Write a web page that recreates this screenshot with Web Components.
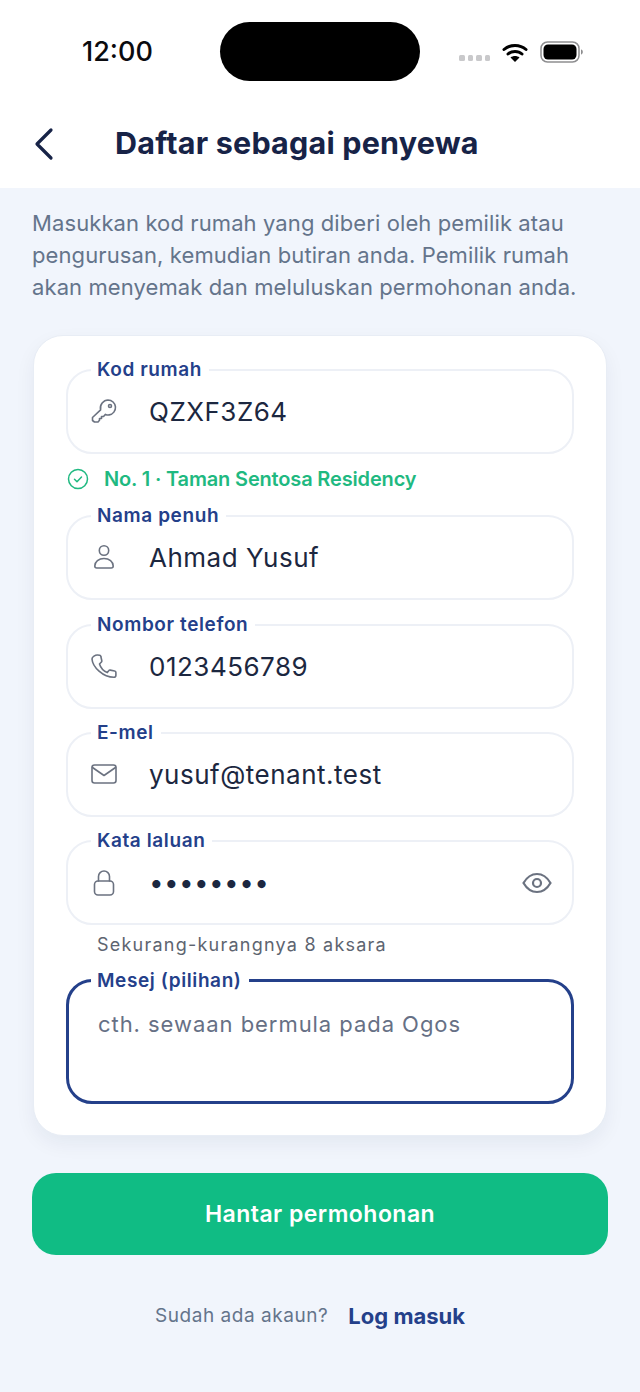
<!DOCTYPE html>
<html>
<head>
<meta charset="utf-8">
<style>
html, body { margin: 0; padding: 0; }
body { background: #f1f5fc; font-family: Inter, "Noto Sans", sans-serif; width: 640px; height: 1392px; overflow: hidden; }
</style>
</head>
<body>
<app-page>
	<status-bar></status-bar>
	<top-bar>Daftar sebagai penyewa</top-bar>
	<intro-text>Masukkan kod rumah yang diberi oleh pemilik atau pengurusan, kemudian butiran anda. Pemilik rumah akan menyemak dan meluluskan permohonan anda.</intro-text>
	<form-card>
		<form-field label="Kod rumah" icon="key" value="QZXF3Z64"></form-field>
		<ok-note>No. 1 · Taman Sentosa Residency</ok-note>
		<form-field label="Nama penuh" icon="user" value="Ahmad Yusuf"></form-field>
		<form-field class="gap" label="Nombor telefon" icon="phone" value="0123456789"></form-field>
		<form-field class="gap" label="E-mel" icon="mail" value="yusuf@tenant.test"></form-field>
		<form-field class="gap" label="Kata laluan" icon="lock" value="••••••••" secret></form-field>
		<hint-text>Sekurang-kurangnya 8 aksara</hint-text>
		<form-field label="Mesej (pilihan)" value="cth. sewaan bermula pada Ogos" area></form-field>
	</form-card>
	<big-button>Hantar permohonan</big-button>
	<login-row></login-row>
</app-page>
<script>
const ICONS = {
	key: '<circle cx="19" cy="7" r="1.500"/><path d="M17 1a7.500 7.500 0 0 1 1.200 14.900c-1.300.2-2.500 0-3.700-.5l-2 2.100H10.500v2h-2v1.800L7 23H3.500L1.500 21.500V18.500l8.100-7.600C8.400 5.900 12.500 1 17 1z"/>',
	user: '<circle cx="13" cy="5.500" r="4.700"/><path d="M3.800 21c0-4.500 4-7.500 9.200-7.500s9.200 3 9.200 7.500c0 1-.8 2-2 2H5.800c-1.200 0-2-1-2-2z"/>',
	phone: '<path d="M6.500 1 8.700 1.300c.6.100 1 .5 1.100 1l1 4.400c.1.500 0 1-.4 1.300L8.500 10c1.300 4.200 3.900 7 7.800 8.600l1.600-2c.3-.4.800-.6 1.300-.5l4.500.9c.7.100 1.200.7 1.200 1.400v2.800c0 1.100-.9 2-2 2C12 23.200 1.500 13 1 5c-.1-2 3.500-4.200 5.500-4z"/>',
	mail: '<rect x="1" y="3" width="24" height="18" rx="2.500"/><path d="M1.500 5.500 13 13.500l11.500-8"/>',
	lock: '<rect x="3.500" y="11" width="19" height="14" rx="3.500"/><path d="M7.500 11V6.500a5.500 5.500 0 0 1 11 0V11"/>'
};

class AppPage extends HTMLElement {
	constructor() {
		super();
		this.attachShadow({ mode: "open" });
		this.shadowRoot.innerHTML = `
			<style>:host { display: flex; flex-direction: column; width: 640px; }</style>
			<slot></slot>`;
	}
}

class StatusBar extends HTMLElement {
	constructor() {
		super();
		this.attachShadow({ mode: "open" });
		this.shadowRoot.innerHTML = `
			<style>
				:host { display: block; background: #fff; height: 100px; }
				.row { display: flex; align-items: flex-start; padding: 22px 50px 0 82px; }
				.time { font: 500 27px/60px Inter, sans-serif; color: #0b0b0f; width: 138px; }
				.island { width: 200px; height: 59px; border-radius: 30px; background: #000; }
				.right { flex: 1; display: flex; align-items: center; height: 60px; padding-left: 39px; }
				.dots { display: flex; gap: 3px; margin-right: 12px; margin-top: 12px; }
				.dots i { width: 5.500px; height: 5.500px; border-radius: 1.500px; background: #c9c9cb; }
				.batt { margin-left: 12px; }
			</style>
			<div class="row">
				<span class="time">12:00</span>
				<div class="island"></div>
				<div class="right">
					<div class="dots"><i></i><i></i><i></i><i></i></div>
					<svg width="26" height="21" viewBox="0 0 26 21"><path d="M2 7.500c6-5.500 16-5.500 22 0M6 12c3.800-3.500 10.200-3.500 14 0" fill="none" stroke="#000" stroke-width="3" stroke-linecap="round"/><path d="M13 20l-4.500-4.500c2.500-2 6.500-2 9 0z" fill="#000"/></svg>
					<svg class="batt" width="44" height="22" viewBox="0 0 44 22"><rect x="1" y="1" width="38" height="20" rx="6.500" fill="none" stroke="#8e8e90" stroke-width="1.500"/><rect x="3.500" y="3.500" width="33" height="15" rx="4.500" fill="#000"/><path d="M41 8.500c1.200.3 1.800 1.200 1.800 2.500s-.6 2.200-1.800 2.500z" fill="#8e8e90"/></svg>
				</div>
			</div>`;
	}
}

class TopBar extends HTMLElement {
	constructor() {
		super();
		this.attachShadow({ mode: "open" });
		this.shadowRoot.innerHTML = `
			<style>
				:host { display: flex; align-items: center; height: 88px; background: #fff; padding-left: 32px; box-sizing: border-box; }
				svg { width: 24px; height: 34px; flex: none; margin-bottom: 1px; }
				.title { margin-left: 59px; font: 700 30.500px/40px Inter, sans-serif; color: #172347; letter-spacing: .2px; margin-bottom: 2px; }
			</style>
			<svg viewBox="0 0 24 34"><path d="M19 3 5 17l14 14" fill="none" stroke="#172347" stroke-width="3.200" stroke-linecap="round" stroke-linejoin="round"/></svg>
			<span class="title"><slot></slot></span>`;
	}
}

class IntroText extends HTMLElement {
	constructor() {
		super();
		this.attachShadow({ mode: "open" });
		this.shadowRoot.innerHTML = `
			<style>
				:host { display: block; padding: 19px 32px 0; height: 147px; box-sizing: border-box; font: 400 22px/32px Inter, sans-serif; color: #64748b; letter-spacing: .1px; }
			</style>
			<slot></slot>`;
	}
}

class FormCard extends HTMLElement {
	constructor() {
		super();
		this.attachShadow({ mode: "open" });
		this.shadowRoot.innerHTML = `
			<style>
				:host { display: flex; flex-direction: column; margin: 0 33px; padding: 22px 32px 31px; box-sizing: border-box; background: #fff; border: 1px solid #e8edf5; border-radius: 30px; box-shadow: 0 8px 20px rgba(23, 35, 71, .06); }
				::slotted(*) { flex: none; }
				::slotted(.gap) { margin-top: 12.300px; }
			</style>
			<slot></slot>`;
	}
}

class FormField extends HTMLElement {
	constructor() {
		super();
		this.attachShadow({ mode: "open" });
		const secret = this.hasAttribute("secret");
		const icon = this.getAttribute("icon");
		this.shadowRoot.innerHTML = `
			<style>
				:host { display: block; }
				fieldset { margin: 0; box-sizing: border-box; height: 96px; padding: 0 20px 10px 23px; border: 2px solid #edf0f6; border-radius: 26px; display: flex; align-items: center; min-width: 0; }
				legend { margin-left: 0; padding: 0 7px 0 6px; font: 600 19px/24px Inter, sans-serif; color: #24408a; letter-spacing: .6px; }
				.ico { width: 26px; height: 26px; flex: none; fill: none; stroke: #6b7280; stroke-width: 1.600; stroke-linecap: round; stroke-linejoin: round; }
				.val { margin-left: 32px; font: 400 26px/34px Inter, sans-serif; color: #1c2740; letter-spacing: .5px; flex: 1; white-space: nowrap; }
				.secret { letter-spacing: .4px; }
				.eye { width: 30px; height: 24px; fill: none; stroke: #6b7280; stroke-width: 2.200; flex: none; }
				:host([area]) fieldset { height: 135px; border: 3px solid #24408a; border-radius: 26px; padding: 14px 20px 0 29px; align-items: flex-start; }
				:host([area]) legend { margin-left: -7px; }
				:host([area]) .val { margin-left: 0; color: #667085; font-size: 22px; letter-spacing: .95px; }
			</style>
			<fieldset>
				<legend>${this.getAttribute("label")}</legend>
				${icon ? `<svg class="ico" viewBox="0 0 26 26">${ICONS[icon]}</svg>` : ""}
				<span class="val ${secret ? "secret" : ""}">${this.getAttribute("value")}</span>
				${secret ? `<svg class="eye" viewBox="0 0 30 24"><path d="M1.500 12C5 6 9.500 3 15 3s10 3 13.500 9C25 18 20.500 21 15 21S5 18 1.500 12z"/><circle cx="15" cy="12" r="4"/></svg>` : ""}
			</fieldset>`;
	}
}

class OkNote extends HTMLElement {
	constructor() {
		super();
		this.attachShadow({ mode: "open" });
		this.shadowRoot.innerHTML = `
			<style>
				:host { display: flex; align-items: center; height: 50.400px; font: 600 20px/26px Inter, sans-serif; color: #1fb981; letter-spacing: -.16px; }
				svg { width: 22px; height: 22px; margin-left: 1px; margin-right: 15px; fill: none; stroke: currentColor; stroke-width: 1.500; stroke-linecap: round; stroke-linejoin: round; }
			</style>
			<svg viewBox="0 0 22 22"><circle cx="11" cy="11" r="9.500"/><path d="m7.500 11.200 2.500 2.500 4.500-4.700"/></svg>
			<slot></slot>`;
	}
}

class HintText extends HTMLElement {
	constructor() {
		super();
		this.attachShadow({ mode: "open" });
		this.shadowRoot.innerHTML = `
			<style>
				:host { display: block; height: 43.700px; padding: 8px 0 0 31px; box-sizing: border-box; font: 400 18px/24px Inter, sans-serif; color: #5d6470; letter-spacing: 1.230px; }
			</style>
			<slot></slot>`;
	}
}

class BigButton extends HTMLElement {
	constructor() {
		super();
		this.attachShadow({ mode: "open" });
		this.shadowRoot.innerHTML = `
			<style>
				:host { display: flex; align-items: center; justify-content: center; margin: 37px 32px 0; height: 82px; padding-top: 1px; box-sizing: border-box; border-radius: 24px; background: #10bc84; color: #fff; font: 600 23px/30px Inter, sans-serif; letter-spacing: .47px; }
			</style>
			<slot></slot>`;
	}
}

class LoginRow extends HTMLElement {
	constructor() {
		super();
		this.attachShadow({ mode: "open" });
		this.shadowRoot.innerHTML = `
			<style>
				:host { display: flex; align-items: center; justify-content: center; gap: 20px; margin-top: 46px; height: 30px; padding-right: 20px; }
				.q { font: 400 19px/30px Inter, sans-serif; color: #64748b; letter-spacing: .55px; }
				.a { font: 700 22px/30px Inter, sans-serif; color: #24408a; }
			</style>
			<span class="q">Sudah ada akaun?</span>
			<span class="a">Log masuk</span>`;
	}
}

customElements.define("app-page", AppPage);
customElements.define("status-bar", StatusBar);
customElements.define("top-bar", TopBar);
customElements.define("intro-text", IntroText);
customElements.define("form-card", FormCard);
customElements.define("form-field", FormField);
customElements.define("ok-note", OkNote);
customElements.define("hint-text", HintText);
customElements.define("big-button", BigButton);
customElements.define("login-row", LoginRow);
</script>
</body>
</html>
